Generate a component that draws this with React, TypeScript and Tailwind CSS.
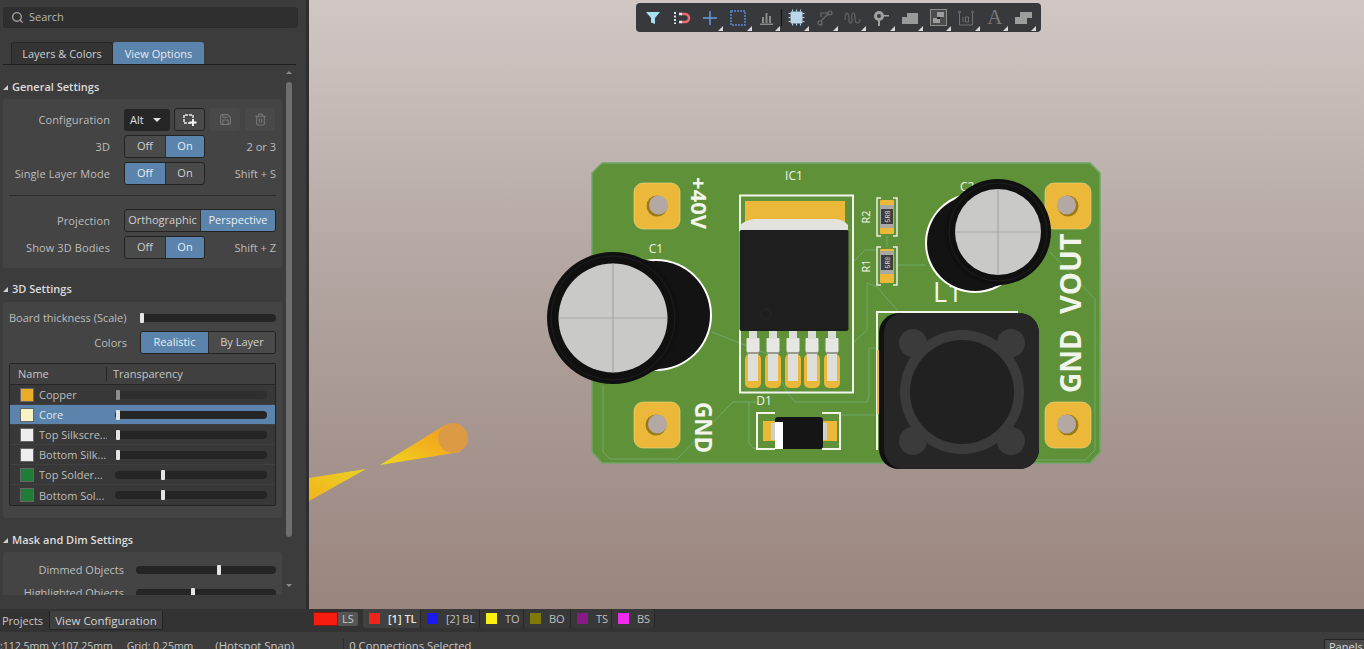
import { Search, Save, Trash2 } from 'lucide-react';
import type { ReactNode } from 'react';

const font = 'font-["Open_Sans",sans-serif]';

function Seg({ items, active, widths }: { items: string[]; active: number; widths: string[] }) {
  return (
    <div className="flex h-[23px] overflow-hidden rounded-[3px] border border-[#232323] bg-[#4a4a4a]">
      {items.map((it, i) => (
        <div
          key={it}
          className={`flex items-center justify-center pb-[2px] ${widths[i]} ${i === active ? 'bg-[#5a84ab] text-[#e8eef4]' : 'text-[#d0d0d0]'} ${i > 0 ? 'border-l border-[#2e2e2e]' : ''}`}
        >
          {it}
        </div>
      ))}
    </div>
  );
}

function OffOn({ active }: { active: number }) {
  return <Seg items={['Off', 'On']} active={active} widths={['w-[40px]', 'w-[39px]']} />;
}

function Row({ label, children, hint }: { label: string; children: ReactNode; hint?: string }) {
  return (
    <div className="flex h-[23px] items-center">
      <div className="w-[107px] whitespace-nowrap pt-[1px] text-right tracking-[0.1px] text-[#bdbdbd]">{label}</div>
      <div className="ml-[14px]">{children}</div>
      {hint && <div className="ml-auto pr-[6px] pt-[1px] text-[#bdbdbd]">{hint}</div>}
    </div>
  );
}

function Heading({ children, className }: { children: ReactNode; className: string }) {
  return (
    <div className={`flex h-[14px] items-center font-semibold text-[#dcdcdc] ${className}`}>
      <span className="ml-[3px] mr-[4px] h-0 w-0 border-b-[5px] border-l-[5px] border-b-[#cfcfcf] border-l-transparent" />
      {children}
    </div>
  );
}

function Slider({ w, at, dim }: { w: string; at: string; dim?: boolean }) {
  return (
    <div className={`relative h-[8px] rounded-full bg-[#252525] ${w} ${dim ? 'opacity-50' : ''}`}>
      <div className={`absolute top-[-1px] h-[10px] w-[4px] rounded-[1px] bg-[#e4e4e4] ${at} ${dim ? 'bg-[#777]' : ''}`} />
    </div>
  );
}

const layers = [
  { name: 'Copper', color: 'bg-[#e8ac28]', at: 'left-[1px]', dim: true },
  { name: 'Core', color: 'bg-[#f6f3c4]', at: 'left-[1px]', sel: true },
  { name: 'Top Silkscre...', color: 'bg-[#eeeeee]', at: 'left-[1px]' },
  { name: 'Bottom Silk...', color: 'bg-[#eeeeee]', at: 'left-[1px]' },
  { name: 'Top Solder...', color: 'bg-[#1f7d38]', at: 'left-[46px]' },
  { name: 'Bottom Sol...', color: 'bg-[#1f7d38]', at: 'left-[46px]' },
];

function SidePanel() {
  return (
    <aside className="flex w-[309px] shrink-0 flex-col border-r-[3px] border-[#2e2e2e] bg-[#3c3c3c]">
      <div className="ml-[3px] mt-[7px] flex h-[21px] w-[295px] items-center rounded-[3px] border border-[#2c2c2c] bg-[#2f2f2f] pb-[1px] pl-[7px] text-[#b5b5b5]">
        <Search size={13} strokeWidth={2.5} className="text-[#a0a0a0]" />
        <span className="ml-[5px]">Search</span>
      </div>

      <div className="ml-[3px] mt-[14px] flex h-[23px] w-[293px] border-b border-[#1f1f1f] pl-[8px]">
        <div className="flex w-[102px] items-center justify-center rounded-t-[3px] border border-b-0 border-[#262626] bg-[#343434] pt-[1px] text-[#cfcfcf]">
          Layers &amp; Colors
        </div>
        <div className="flex w-[91px] items-center justify-center rounded-t-[3px] bg-[#5a84ab] pt-[1px] text-[#e4ebf2]">
          View Options
        </div>
      </div>

      <div className="flex h-[530px]">
        <div className="w-[282px] shrink-0 overflow-hidden pl-[3px]">
          <Heading className="mt-[15px] -ml-[3px]">General Settings</Heading>
          <div className="mt-[5px] h-[169px] rounded-[3px] bg-[#444444] pt-[9px]">
            <div className="flex flex-col gap-[4px]">
              <Row label="Configuration">
                <div className="flex items-center">
                  <div className="flex h-[22px] w-[46px] items-center rounded-[3px] bg-[#262626] pl-[6px] text-[#e0e0e0]">
                    Alt
                    <span className="ml-[9px] h-0 w-0 border-x-[4px] border-t-[4px] border-x-transparent border-t-[#e0e0e0]" />
                  </div>
                  <div className="ml-[4px] flex h-[23px] w-[31px] items-center justify-center rounded-[3px] border border-[#232323] bg-[#4a4a4a]">
                    <svg width="16" height="14" viewBox="0 0 16 14" fill="none">
                      <path d="M9 10H2V2h9v4" stroke="#f0f0f0" strokeWidth="1.4" strokeDasharray="3 1" />
                      <path d="M11 6v7M7.5 9.5h7" stroke="#ffffff" strokeWidth="1.8" />
                    </svg>
                  </div>
                  <div className="ml-[5px] flex h-[23px] w-[30px] items-center justify-center rounded-[3px] bg-[#494949]">
                    <Save size={13} className="text-[#777]" />
                  </div>
                  <div className="ml-[5px] flex h-[23px] w-[30px] items-center justify-center rounded-[3px] bg-[#494949]">
                    <Trash2 size={13} className="text-[#777]" />
                  </div>
                </div>
              </Row>
              <Row label="3D" hint="2 or 3"><OffOn active={1} /></Row>
              <Row label="Single Layer Mode" hint="Shift + S"><OffOn active={0} /></Row>
            </div>
            <div className="ml-[6px] mt-[10px] h-px w-[267px] bg-[#2c2c2c]" />
            <div className="mt-[13px] flex flex-col gap-[4px]">
              <Row label="Projection">
                <Seg items={['Orthographic', 'Perspective']} active={1} widths={['w-[75px]', 'w-[75px]']} />
              </Row>
              <Row label="Show 3D Bodies" hint="Shift + Z"><OffOn active={1} /></Row>
            </div>
          </div>

          <Heading className="mt-[14px] -ml-[3px]">3D Settings</Heading>
          <div className="mt-[6px] h-[216px] rounded-[3px] bg-[#444444] pl-[6px] pt-[9px]">
            <div className="flex h-[14px] items-center whitespace-nowrap text-[#bdbdbd]">
              <span className="w-[131px]">Board thickness (Scale)</span>
              <Slider w="w-[136px]" at="left-0" />
            </div>
            <div className="mt-[6px] flex h-[23px] items-center text-[#bdbdbd]">
              <span className="w-[118px] pr-0 text-right">Colors</span>
              <div className="ml-[13px]">
                <Seg items={['Realistic', 'By Layer']} active={0} widths={['w-[67px]', 'w-[67px]']} />
              </div>
            </div>
            <div className="mt-[9px] w-[267px] rounded-[2px] border border-[#232323] bg-[#383838]">
              <div className="flex h-[21px] items-center border-b border-[#262626] bg-[#404040] text-[#c4c4c4]">
                <span className="w-[96px] pl-[8px]">Name</span>
                <span className="border-l border-[#262626] pl-[6px]">Transparency</span>
              </div>
              {layers.map((l) => (
                <div
                  key={l.name}
                  className={`flex h-[20px] items-center border-b border-[#404040] last:border-b-0 ${l.sel ? 'bg-[#5a84ab]' : ''}`}
                >
                  <div className={`ml-[10px] h-[14px] w-[14px] shrink-0 border border-[#666] ${l.color}`} />
                  <span className={`ml-[5px] w-[68px] overflow-hidden whitespace-nowrap pt-[1px] ${l.sel ? 'text-[#dfe6ee]' : 'text-[#bdbdbd]'}`}>{l.name}</span>
                  <div className="ml-[8px]">
                    <Slider w="w-[152px]" at={l.at} dim={l.dim} />
                  </div>
                </div>
              ))}
            </div>
          </div>

          <Heading className="mt-[15px] -ml-[3px]">Mask and Dim Settings</Heading>
          <div className="mt-[5px] h-[60px] rounded-[3px] bg-[#444444] pt-[11px]">
            <div className="flex h-[14px] items-center">
              <span className="w-[121px] text-right text-[#bdbdbd]">Dimmed Objects</span>
              <div className="ml-[12px]"><Slider w="w-[140px]" at="left-[81px]" /></div>
            </div>
            <div className="mt-[9px] flex h-[14px] items-center">
              <span className="w-[121px] whitespace-nowrap text-right text-[#bdbdbd]">Highlighted Objects</span>
              <div className="ml-[12px]"><Slider w="w-[140px]" at="left-[55px]" /></div>
            </div>
          </div>
        </div>
        <div className="ml-[4px] flex w-[6px] flex-col items-center">
          <span className="mt-[6px] h-0 w-0 border-x-[3px] border-b-[3px] border-x-transparent border-b-[#8a8a8a]" />
          <div className="mt-[8px] h-[455px] w-[6px] rounded-full bg-[#6e6e6e]" />
          <span className="mt-[47px] h-0 w-0 border-x-[3px] border-t-[3px] border-x-transparent border-t-[#8a8a8a]" />
        </div>
      </div>
    </aside>
  );
}

function ToolBtn({ children, corner = true, className = '' }: { children: ReactNode; corner?: boolean; className?: string }) {
  return (
    <div className={`relative flex h-[29px] w-[28.4px] items-center justify-center ${className}`}>
      {children}
      {corner && (
        <span className="absolute bottom-[1px] right-[1px] h-0 w-0 border-b-[5px] border-l-[5px] border-b-[#d8d8d8] border-l-transparent" />
      )}
    </div>
  );
}

function Toolbar() {
  const dim = '#8a8a8a';
  return (
    <div className="absolute left-[327px] top-[3px] flex h-[29px] w-[405px] items-center rounded-[4px] bg-[#38393c] pl-[3px]">
      <ToolBtn corner={false}>
        <svg width="16" height="14" viewBox="0 0 16 14"><path d="M1 1h14L10 7v6l-4-1.500V7z" fill="#a9e0f2" /></svg>
      </ToolBtn>
      <ToolBtn corner={false}>
        <svg width="18" height="14" viewBox="0 0 18 14" fill="none">
          <path d="M2 1v12" stroke="#cfe6f2" strokeWidth="2" strokeDasharray="2 1.500" />
          <path d="M8 3h4a4 4 0 0 1 0 8H8" stroke="#ef6a72" strokeWidth="2.600" />
          <path d="M6 3h3M6 11h3" stroke="#dfe8ee" strokeWidth="2.600" />
        </svg>
      </ToolBtn>
      <ToolBtn>
        <svg width="14" height="14" viewBox="0 0 14 14"><path d="M7 0v14M0 7h14" stroke="#6a9be0" strokeWidth="1.500" /></svg>
      </ToolBtn>
      <ToolBtn>
        <svg width="16" height="16" viewBox="0 0 16 16" fill="none"><rect x="1" y="1" width="14" height="14" stroke="#5f86d8" strokeWidth="1.500" strokeDasharray="2 1" /></svg>
      </ToolBtn>
      <ToolBtn>
        <svg width="15" height="14" viewBox="0 0 15 14"><path d="M3 6h2v6H3zM6.500 2h2v10h-2zM10 5h2v7h-2zM1 12.500h13V14H1z" fill={dim} /></svg>
      </ToolBtn>
      <div className="h-[17px] w-px bg-[#111]" />
      <ToolBtn>
        <svg width="17" height="17" viewBox="0 0 17 17">
          <rect x="2.500" y="2.500" width="12" height="12" rx="1" fill="#b9d6ea" />
          <path d="M4.500 0.500v2M8.500 0.500v2M12.500 0.500v2M4.500 14.500v2M8.500 14.500v2M12.500 14.500v2M0.500 4.500h2M0.500 8.500h2M0.500 12.500h2M14.500 4.500h2M14.500 8.500h2M14.500 12.500h2" stroke="#b9d6ea" />
        </svg>
      </ToolBtn>
      <ToolBtn>
        <svg width="16" height="16" viewBox="0 0 16 16" fill="none" stroke="#6e6e6e" strokeWidth="1.200">
          <circle cx="13" cy="3" r="2" /><circle cx="3" cy="13" r="2" />
          <path d="M11 3H4v4M4 11l7-7" />
        </svg>
      </ToolBtn>
      <ToolBtn>
        <svg width="17" height="12" viewBox="0 0 17 12" fill="none" stroke="#606060" strokeWidth="1.300">
          <path d="M1 8c0-9 4-9 4 0 0 4 3 4 3 0-1-9 3-9 3-2s5 6 5 1" />
        </svg>
      </ToolBtn>
      <ToolBtn>
        <svg width="17" height="16" viewBox="0 0 17 16">
          <circle cx="6" cy="6" r="5" fill="#a0a0a0" /><circle cx="6" cy="6" r="2" fill="#38393c" />
          <path d="M5 10h2v6H5zM10 5h6v1.500h-6z" fill="#a0a0a0" />
        </svg>
      </ToolBtn>
      <ToolBtn>
        <svg width="16" height="12" viewBox="0 0 16 12"><path d="M0 12V5h5V1h11v11z" fill="#9a9a9a" /></svg>
      </ToolBtn>
      <ToolBtn>
        <svg width="17" height="17" viewBox="0 0 17 17">
          <rect x="0.500" y="0.500" width="16" height="16" fill="#4c4c4c" stroke="#8c8c8c" />
          <path d="M3 14V9h4V3h7v5h-4v6z" fill="#9d9d9d" /><rect x="7" y="8" width="3" height="2" fill="#222" />
        </svg>
      </ToolBtn>
      <ToolBtn>
        <svg width="16" height="16" viewBox="0 0 16 16" fill="none" stroke="#707070" strokeWidth="1">
          <path d="M1.500 3v12h13V3" />
          <circle cx="1.500" cy="2" r="1" /><circle cx="14.500" cy="2" r="1" />
          <path d="M5 7v5M7.500 7h3v5h-3z" />
        </svg>
      </ToolBtn>
      <ToolBtn>
        <span className='font-["Liberation_Serif",serif] text-[21px] leading-none text-[#787878]'>A</span>
      </ToolBtn>
      <ToolBtn>
        <svg width="17" height="13" viewBox="0 0 17 13"><path d="M0 13V6h5V1h12v6h-5v6z" fill="#9d9d9d" /></svg>
      </ToolBtn>
    </div>
  );
}

function Pad({ x, y, hx, hy }: { x: number; y: number; hx: number; hy: number }) {
  return (
    <g>
      <rect x={x} y={y} width="46" height="46" rx="9" fill="#ecb83a" stroke="#f0d890" strokeWidth="0.600" />
      <circle cx={hx} cy={hy} r="10.500" fill="#9a7a18" />
      <circle cx={hx + (hx < 800 ? 1.500 : -1.500)} cy={hy - 1} r="9.500" fill="#b3a8a3" />
    </g>
  );
}

function Resistor({ y, code, flip }: { y: number; code: string; flip?: boolean }) {
  return (
    <g>
      <path d={`M881 ${y}h-4v38h4M893 ${y}h4v38h-4`} stroke="#e8efe2" strokeWidth="1.500" fill="none" />
      <rect x="880" y={y + 2} width="14" height="34" rx="1" fill="#ecb83a" />
      <rect x="880" y={y + (flip ? 4 : 7)} width="14" height="23" fill="#a8a8a4" />
      <rect x="881" y={y + (flip ? 8 : 11)} width="12" height="15" fill="#3e3e3e" />
      <text transform={`translate(889.500 ${y + (flip ? 15.500 : 18.500)}) rotate(-90)`} textAnchor="middle" fontSize="7" fill="#d8d8d8" fontFamily="Liberation Mono, monospace">{code}</text>
    </g>
  );
}

function Cap({ fx, fy, fr, outer, bx, by, br, silk }: { fx: number; fy: number; fr: number; outer: number; bx: number; by: number; br: number; silk: number }) {
  const dx = bx - fx;
  const dy = by - fy;
  const len = Math.hypot(dx, dy);
  const nx = -dy / len;
  const ny = dx / len;
  return (
    <g>
      <circle cx={bx} cy={by} r={silk} fill="#ffffff" />
      <circle cx={bx} cy={by} r={br} fill="#131313" />
      <polygon
        points={`${fx + nx * outer},${fy + ny * outer} ${bx + nx * br},${by + ny * br} ${bx - nx * br},${by - ny * br} ${fx - nx * outer},${fy - ny * outer}`}
        fill="#131313"
      />
      <circle cx={fx} cy={fy} r={outer} fill="#101010" />
      <circle cx={fx} cy={fy} r={outer - 4} fill="none" stroke="#1f1f1f" strokeWidth="1" />
      <circle cx={fx} cy={fy} r={fr} fill="#c9cac7" />
      <path d={`M${fx - fr} ${fy}h${fr * 2}M${fx} ${fy - fr}v${fr * 2}`} stroke="#a6a7a4" strokeWidth="1.200" />
    </g>
  );
}

function Board() {
  const leads = [753, 773, 793, 812, 832];
  const silk = '#f2f5ec';
  const trace = '#6ea86a';
  return (
    <svg className="absolute inset-0" width="1055" height="609" viewBox="0 0 1055 609" style={{ fontFamily: '"Open Sans", sans-serif' }}>
      <defs>
        <linearGradient id="flame" x1="0" y1="1" x2="1" y2="0">
          <stop offset="0" stopColor="#f0d820" />
          <stop offset="0.500" stopColor="#f2b41e" />
          <stop offset="1" stopColor="#f29a1e" />
        </linearGradient>
        <linearGradient id="flame2" x1="0" y1="1" x2="1" y2="0">
          <stop offset="0" stopColor="#f2b41e" />
          <stop offset="1" stopColor="#ecd024" />
        </linearGradient>
      </defs>
      <g transform="translate(-309 0)">
        <polygon points="309,478 366,469 309,501" fill="url(#flame2)" />
        <polygon points="380,465 445,425 460,452" fill="url(#flame)" />
        <circle cx="453" cy="438" r="15" fill="#dd9a45" />

        <polygon points="602,163 1090,163 1100,173 1100,452 1090,463 602,463 592,452 592,173" fill="#5f9238" stroke="#6fa66a" strokeWidth="1.500" />

        <g fill="none" stroke={trace} strokeWidth="1">
          <path d="M603 385v67l7 7h67l56-57h24" />
          <path d="M749 402v41l4 5h5" />
          <path d="M712 332l58 23 17 37 8 10h72l2-7v-47h8" />
          <path d="M853 262l12-12h12" />
          <path d="M853 343l14-13v-47l10 4" />
          <path d="M877 287l20 23" />
          <path d="M887 236v11" />
          <path d="M897 265h28" />
          <path d="M1050 252l45 47v151l-10 10h-50" />
          <path d="M840 415h35" />
        </g>

        <Pad x={634} y={183} hx={657} hy={206} />
        <Pad x={634} y={402} hx={656} hy={425} />
        <Pad x={1045} y={183} hx={1068} hy={206} />
        <Pad x={1045} y={402} hx={1068} hy={425} />

        <text transform="translate(691 177) rotate(90)" fontSize="22" fontWeight="700" fill={silk}>+40V</text>
        <text transform="translate(695 402) rotate(90)" fontSize="22.500" fontWeight="700" fill={silk}>GND</text>
        <text transform="translate(1081 314) rotate(-90)" fontSize="29" fontWeight="700" fill={silk}>VOUT</text>
        <text transform="translate(1081 393) rotate(-90)" fontSize="28" fontWeight="700" fill={silk}>GND</text>
        <text x="794" y="180" textAnchor="middle" fontSize="12" fill={silk}>IC1</text>
        <text x="656" y="253" textAnchor="middle" fontSize="12" fill={silk}>C1</text>
        <text x="764" y="405" textAnchor="middle" fontSize="12" fill={silk}>D1</text>
        <text transform="translate(870 217) rotate(-90)" textAnchor="middle" fontSize="11" fill={silk}>R2</text>
        <text transform="translate(870 266) rotate(-90)" textAnchor="middle" fontSize="11" fill={silk}>R1</text>
        <text x="960" y="191" fontSize="12" fill={silk}>C2</text>
        <text x="933" y="302" fontSize="27" fill={silk}>L1</text>

        <rect x="740" y="195.500" width="113" height="197" fill="none" stroke={silk} strokeWidth="2" />
        <rect x="745" y="201" width="100" height="22" fill="#ecb83a" />
        <path d="M740 230v-5q6-5 14-6h82q8 1 12 6v5z" fill="#e2e2de" />
        {leads.map((x) => (
          <g key={x}>
            <rect x={x - 8} y="354" width="16" height="34" rx="5" fill="#ecb83a" />
            <rect x={x - 5} y="350" width="10" height="31" fill="#dededa" />
            <rect x={x - 6.500} y="338" width="13" height="14" rx="1" fill="#e6e6e2" />
            <rect x={x - 4} y="331" width="8" height="8" fill="#dcdcd8" />
            <rect x={x - 6} y="352" width="12" height="2" fill="#9a9a90" />
          </g>
        ))}
        <rect x="739.500" y="230" width="109" height="101" rx="2" fill="#1e1e1e" />
        <circle cx="766" cy="314" r="5" fill="none" stroke="#2a2a2a" />

        <path d="M775 413h-18v36h18M822 413h18v36h-18" fill="none" stroke={silk} strokeWidth="2" />
        <rect x="763" y="421" width="13" height="20" fill="#ecb83a" />
        <rect x="822" y="421" width="15" height="20" fill="#ecb83a" />
        <rect x="771" y="423" width="56" height="17" fill="#cfcfcb" />
        <rect x="775" y="417" width="48" height="32" rx="3" fill="#151515" />
        <rect x="775" y="422" width="8" height="27" fill="#ffffff" />

        <Resistor y={198} code="5R8" />
        <Resistor y={247} code="5R0" flip />

        <Cap fx={613} fy={318} fr={54.500} outer={66} bx={656} by={315} br={54} silk={56} />
        <Cap fx={998} fy={232} fr={43} outer={53} bx={975} by={243} br={48} silk={50} />

        <path d="M877 450v-138h141" fill="none" stroke={silk} strokeWidth="2" />
        <rect x="877" y="350" width="4" height="64" fill="#ecb83a" />
        <rect x="879" y="313" width="160" height="156" rx="20" fill="#111111" />
        <rect x="884" y="313" width="155" height="156" rx="20" fill="#262626" />
        {[[913, 343], [1011, 343], [913, 441], [1011, 441]].map(([cx, cy]) => (
          <circle key={cx * cy} cx={cx} cy={cy} r="14" fill="#3b3b3b" />
        ))}
        <circle cx="962" cy="392" r="62" fill="#3b3b3b" />
        <circle cx="962" cy="392" r="52" fill="#212121" />
      </g>
    </svg>
  );
}

const tabs = [
  { label: '[1] TL', color: 'bg-[#ee2418]', w: 'w-[58px]', active: true },
  { label: '[2] BL', color: 'bg-[#1a1af0]', w: 'w-[59px]' },
  { label: 'TO', color: 'bg-[#f8f010]', w: 'w-[44px]' },
  { label: 'BO', color: 'bg-[#807a08]', w: 'w-[47px]' },
  { label: 'TS', color: 'bg-[#861a86]', w: 'w-[41px]' },
  { label: 'BS', color: 'bg-[#f22af0]', w: 'w-[43px]' },
];

export default function App() {
  return (
    <div className={`flex h-[649px] w-[1364px] flex-col overflow-hidden bg-[#333333] text-[11px] leading-[14px] ${font}`}>
      <div className="flex h-[609px] shrink-0">
        <SidePanel />
        <main className="relative flex-1 overflow-hidden bg-gradient-to-b from-[#d0c7c4] via-[#b0a29d] to-[#9a857e]">
          <Board />
          <Toolbar />
        </main>
      </div>

      <div className="flex h-[23px] shrink-0 items-start bg-[#333333]">
        <div className="flex w-[309px] shrink-0 items-start pt-[2px]">
          <div className="flex h-[19px] w-[49px] items-center pl-[2px] pt-[1px] text-[#c8c8c8]">Projects</div>
          <div className="flex h-[19px] w-[114px] items-center justify-center rounded-b-[2px] border-x border-b border-[#242424] bg-[#3f3f3f] pt-[1px] text-[11.500px] text-[#d4d4d4]">
            View Configuration
          </div>
        </div>
        <div className="ml-[4px] mt-[3px] flex h-[14px] w-[45px] overflow-hidden rounded-[2px]">
          <div className="w-[25px] border border-[#8a1810] bg-[#f81c10]" />
          <div className="flex w-[20px] items-center justify-center bg-[#555555] text-[#c8c8c8]">LS</div>
        </div>
        <div className="ml-[5px] flex">
          {tabs.map((t) => (
            <div
              key={t.label}
              className={`flex h-[19px] items-center rounded-b-[3px] border-r border-[#272727] pl-[6px] ${t.w} ${t.active ? 'bg-[#414141] font-semibold text-[#e6e6e6]' : 'bg-[#383838] text-[#c0c0c0]'}`}
            >
              <span className={`h-[11px] w-[11px] shrink-0 ${t.color}`} />
              <span className="ml-[8px] whitespace-nowrap">{t.label}</span>
            </div>
          ))}
        </div>
      </div>

      <div className="relative flex h-[17px] shrink-0 overflow-hidden bg-[#3d3d3d] pt-[7px] text-[#c8c8c8]">
        <span className="-ml-[6px] whitespace-nowrap text-[10.500px]">X:112.5mm Y:107.25mm</span>
        <span className="ml-[14px] whitespace-nowrap text-[10.500px]">Grid: 0.25mm</span>
        <span className="ml-[22px] whitespace-nowrap text-[11.400px]">(Hotspot Snap)</span>
        <span className="ml-[49px] h-full whitespace-nowrap border-l border-[#2c2c2c] pl-[5px] text-[11.300px]">0 Connections Selected</span>
        <div className="absolute left-[1324px] top-[7px] h-[12px] w-[42px] rounded-tl-[2px] border-l border-t border-[#222] bg-[#4a4a4a] pl-[4px] text-[#d8d8d8]">Panels</div>
      </div>
    </div>
  );
}
